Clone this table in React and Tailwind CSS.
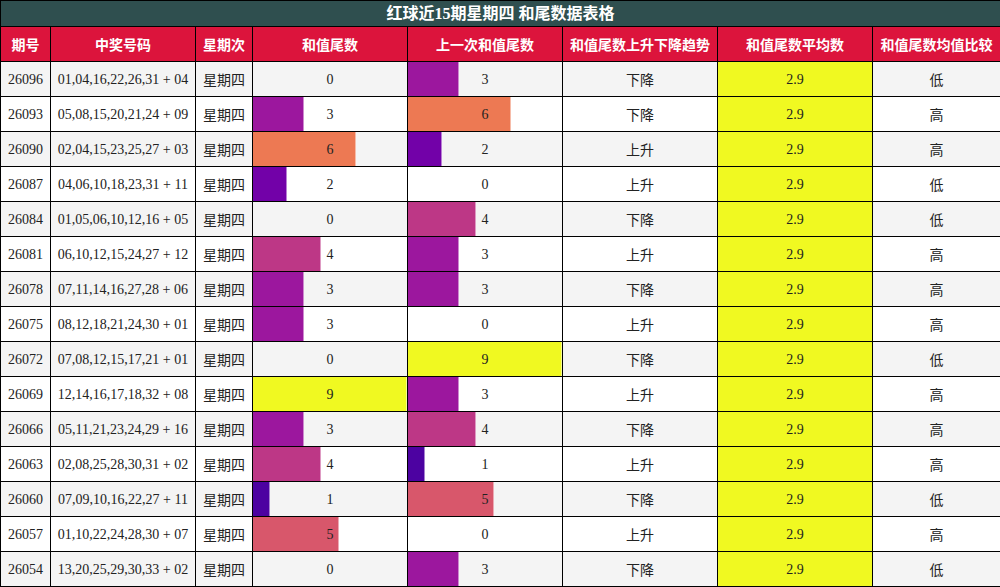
import React from "react";

const rows = [
  ["26096", "01,04,16,22,26,31 + 04", 0, 3, "下降", "低"],
  ["26093", "05,08,15,20,21,24 + 09", 3, 6, "下降", "高"],
  ["26090", "02,04,15,23,25,27 + 03", 6, 2, "上升", "高"],
  ["26087", "04,06,10,18,23,31 + 11", 2, 0, "上升", "低"],
  ["26084", "01,05,06,10,12,16 + 05", 0, 4, "下降", "低"],
  ["26081", "06,10,12,15,24,27 + 12", 4, 3, "上升", "高"],
  ["26078", "07,11,14,16,27,28 + 06", 3, 3, "下降", "高"],
  ["26075", "08,12,18,21,24,30 + 01", 3, 0, "上升", "高"],
  ["26072", "07,08,12,15,17,21 + 01", 0, 9, "下降", "低"],
  ["26069", "12,14,16,17,18,32 + 08", 9, 3, "上升", "高"],
  ["26066", "05,11,21,23,24,29 + 16", 3, 4, "下降", "高"],
  ["26063", "02,08,25,28,30,31 + 02", 4, 1, "上升", "高"],
  ["26060", "07,09,10,16,22,27 + 11", 1, 5, "下降", "低"],
  ["26057", "01,10,22,24,28,30 + 07", 5, 0, "上升", "高"],
  ["26054", "13,20,25,29,30,33 + 02", 0, 3, "下降", "低"],
];

const plasma = {
  1: "#4c02a1",
  2: "#7201a8",
  3: "#9c179e",
  4: "#bd3786",
  5: "#d8576b",
  6: "#ed7953",
  7: "#fb9f3a",
  8: "#fdca26",
  9: "#f0f921",
};

const font = { fontFamily: '"Liberation Serif", "Noto Sans CJK SC", serif' };
const cjk = { fontFamily: '"Noto Sans CJK SC", sans-serif' };

function BarCell({ v, bg }) {
  return (
    <td className={`relative border border-black p-0 text-center ${bg}`}>
      {v > 0 && (
        <div
          className="absolute left-0 top-0 bottom-0 border-r border-white/50"
          style={{ width: `${(v / 9) * 100}%`, backgroundColor: plasma[v] }}
        />
      )}
      <span className="relative">{v}</span>
    </td>
  );
}

export default function App() {
  const headers = ["期号", "中奖号码", "星期次", "和值尾数", "上一次和值尾数", "和值尾数上升下降趋势", "和值尾数平均数", "和值尾数均值比较"];
  const widths = ["w-[50px]", "w-[145px]", "w-[57px]", "w-[155px]", "w-[155px]", "w-[155px]", "w-[155px]", "w-[128px]"];
  return (
    <div className="w-[1000px] bg-white" style={font}>
      <table className="w-[1000px] table-fixed border-collapse text-[14px] text-[#222]">
        <colgroup>
          {widths.map((w, i) => (
            <col key={i} className={w} />
          ))}
        </colgroup>
        <thead>
          <tr className="h-[26px]">
            <th colSpan={8} className="border border-black bg-[#2f4f4f] p-0 text-center text-[16px] font-bold leading-[24px] text-white">
              红球近15期星期四 和尾数据表格
            </th>
          </tr>
          <tr className="h-[35px]">
            {headers.map((h) => (
              <th key={h} className="border border-black bg-[#dc143c] p-0 text-center text-[14px] font-bold text-white" style={cjk}>
                {h}
              </th>
            ))}
          </tr>
        </thead>
        <tbody>
          {rows.map((r, i) => {
            const bg = i % 2 === 0 ? "bg-[#f4f4f4]" : "bg-white";
            return (
              <tr key={r[0]} className="h-[35px]">
                <td className={`border border-black p-0 text-center ${bg}`}>{r[0]}</td>
                <td className={`border border-black p-0 text-center ${bg}`}>{r[1]}</td>
                <td className={`border border-black p-0 text-center ${bg}`} style={cjk}>星期四</td>
                <BarCell v={r[2]} bg={bg} />
                <BarCell v={r[3]} bg={bg} />
                <td className={`border border-black p-0 text-center ${bg}`} style={cjk}>{r[4]}</td>
                <td className="border border-black bg-[#f0f921] p-0 text-center">2.9</td>
                <td className={`border border-black p-0 text-center ${bg}`} style={cjk}>{r[5]}</td>
              </tr>
            );
          })}
        </tbody>
      </table>
    </div>
  );
}
